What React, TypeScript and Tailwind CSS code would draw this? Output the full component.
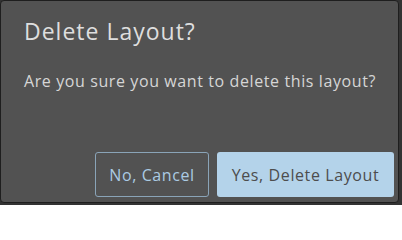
export default function App() {
  return (
    <div className="w-[402px] h-[205px] bg-[#333333] overflow-hidden" style={{ fontFamily: '"Open Sans", "Noto Sans", sans-serif' }}>
      <div className="w-[399px] h-[203px] rounded-[4px] border border-[#1e1e1e] bg-[#525252] flex flex-col">
        <div className="pl-[23px] pt-[14px] text-[23px] leading-[32px] tracking-[1px] text-[#dedede]">Delete Layout?</div>
        <div className="pl-[23px] pt-[22px] text-[16px] leading-[24px] tracking-[0.6px] text-[#d6d6d6]">Are you sure you want to delete this layout?</div>
        <div className="mt-auto flex justify-end gap-[8px] pr-[4px] pb-[5px]">
          <button className="w-[114px] h-[45px] rounded-[3px] border border-[#8aa4b8] text-[16px] tracking-[0.6px] text-[#abcbe3]">No, Cancel</button>
          <button className="w-[177px] h-[45px] rounded-[3px] bg-[#b4d3ea] text-[16px] tracking-[0.6px] text-[#4d4d4d]">Yes, Delete Layout</button>
        </div>
      </div>
    </div>
  );
}
